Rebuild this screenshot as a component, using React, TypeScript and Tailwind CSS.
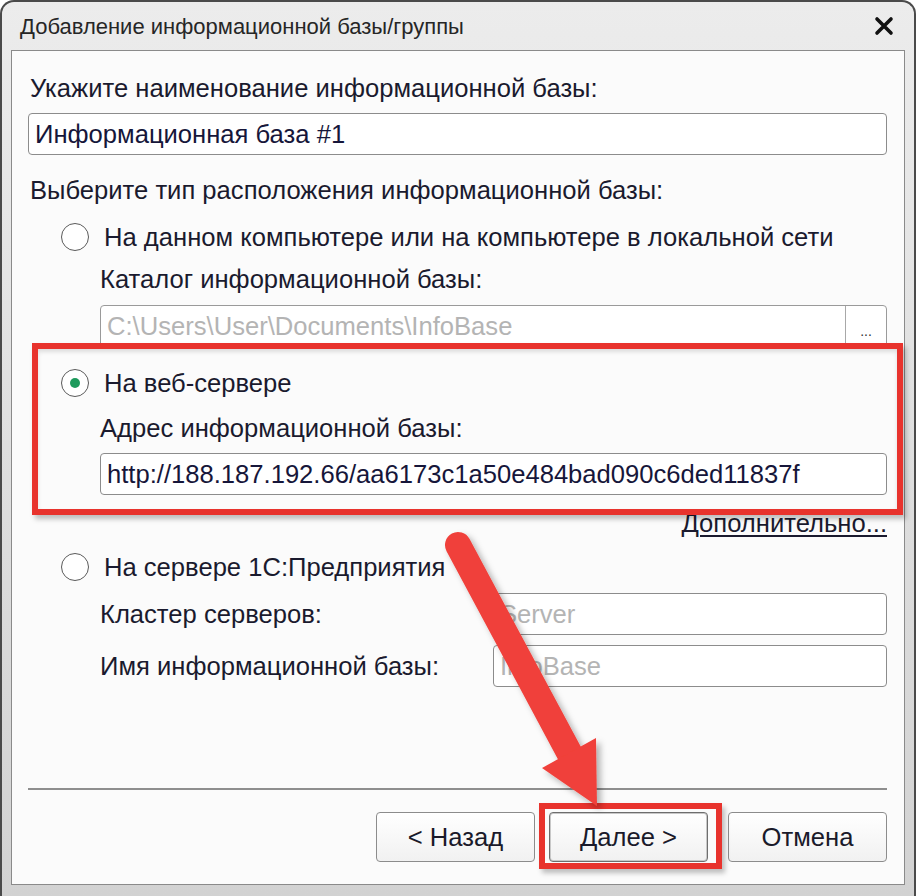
import React from 'react';

const font = { fontFamily: '"Liberation Sans", Arial, sans-serif' };

function Radio({ checked = false }: { checked?: boolean }) {
  return (
    <span className="flex h-[28px] w-[28px] shrink-0 items-center justify-center rounded-full border border-[#5a5a5a] bg-white">
      {checked && <span className="h-[10px] w-[10px] rounded-full bg-[#1e9a5c]" />}
    </span>
  );
}

function Field({ text, muted = false, className = '' }: { text: string; muted?: boolean; className?: string }) {
  return (
    <div
      className={`flex h-[42px] items-center rounded-[4px] border border-[#8c8c8c] bg-white pl-[6px] ${
        muted ? 'text-[#b4b4b4]' : 'text-[#16163a]'
      } ${className}`}
    >
      {text}
    </div>
  );
}

function Button({ label, isDefault = false }: { label: string; isDefault?: boolean }) {
  return (
    <div
      className={`flex h-[50px] w-[159px] items-center justify-center rounded-[4px] border bg-gradient-to-b from-white to-[#f1f1f1] text-[#1a1a2a] ${
        isDefault ? 'border-[#6e6e6e] shadow-[inset_0_0_0_1px_#c8c8c8]' : 'border-[#8c8c8c]'
      }`}
    >
      {label}
    </div>
  );
}

export default function App() {
  return (
    <div className="relative h-[896px] w-[916px] overflow-hidden bg-white" style={font}>
      {/* window frame */}
      <div className="flex h-[896px] w-[916px] flex-col rounded-t-[14px] border-x-2 border-t-2 border-[#4a4a4a] bg-gradient-to-b from-[#ececec] to-[#d2d2d2]">
        {/* title bar */}
        <div className="flex h-[48px] shrink-0 items-center justify-between pl-[18px] pr-[20px]">
          <span className="text-[22px] text-[#262626]">Добавление информационной базы/группы</span>
          <svg width="20" height="20" viewBox="0 0 20 20">
            <path d="M3 3 L17 17 M17 3 L3 17" stroke="#111" strokeWidth="3.6" strokeLinecap="round" />
          </svg>
        </div>

        {/* content panel */}
        <div className="mx-[9px] flex h-[835px] shrink-0 flex-col border border-[#8a8a8a] bg-[#fbfbfb] pl-[16px] pr-[17px] text-[25.6px] text-[#1a1a2e]">
          <div className="ml-[2px] mt-[22px] h-[30px] leading-[30px]">Укажите наименование информационной базы:</div>
          <Field text="Информационная база #1" className="mt-[10px]" />
          <div className="ml-[2px] mt-[20px] h-[30px] leading-[30px]">Выберите тип расположения информационной базы:</div>

          <div className="ml-[33px] mt-[17px] flex h-[30px] items-center gap-[15px]">
            <Radio />
            <span>На данном компьютере или на компьютере в локальной сети</span>
          </div>
          <div className="ml-[72px] mt-[12px] h-[30px] leading-[30px]">Каталог информационной базы:</div>
          <div className="ml-[72px] mt-[11px] flex h-[42px] rounded-[4px] border border-[#9a9a9a] bg-white">
            <div className="flex flex-1 items-center pl-[6px] text-[#b4b4b4]">C:\Users\User\Documents\InfoBase</div>
            <div className="flex w-[41px] items-end justify-center border-l border-[#a8a8a8] pb-[8px] text-[14px] leading-none text-[#333]">...</div>
          </div>

          <div className="ml-[33px] mt-[21px] flex h-[30px] items-center gap-[15px]">
            <Radio checked />
            <span>На веб-сервере</span>
          </div>
          <div className="ml-[72px] mt-[15px] h-[30px] leading-[30px]">Адрес информационной базы:</div>
          <Field text="http://188.187.192.66/aa6173c1a50e484bad090c6ded11837f" className="ml-[72px] mt-[10px]" />

          <div className="mt-[13px] flex h-[30px] justify-end leading-[30px]">
            <span className="underline decoration-[2px] underline-offset-[3px]">Дополнительно...</span>
          </div>

          <div className="ml-[33px] mt-[14px] flex h-[30px] items-center gap-[15px]">
            <Radio />
            <span>На сервере 1С:Предприятия</span>
          </div>
          <div className="ml-[72px] mt-[11px] flex h-[42px] items-center">
            <span className="w-[393px] shrink-0">Кластер серверов:</span>
            <Field text="Server" muted className="flex-1" />
          </div>
          <div className="ml-[72px] mt-[10px] flex h-[42px] items-center">
            <span className="w-[393px] shrink-0">Имя информационной базы:</span>
            <Field text="InfoBase" muted className="flex-1" />
          </div>

          <div className="mt-[101px] h-[2px] bg-[#8e8e8e]" />

          <div className="mt-[22px] flex justify-end">
            <Button label="< Назад" />
            <div className="ml-[14px]">
              <Button label="Далее >" isDefault />
            </div>
            <div className="ml-[20px]">
              <Button label="Отмена" />
            </div>
          </div>
        </div>
      </div>

      {/* annotation: red frame around web-server option */}
      <div className="pointer-events-none absolute left-[32px] top-[343px] h-[172px] w-[871px] border-[6px] border-[#e8332d] shadow-[3px_4px_5px_rgba(0,0,0,0.25),inset_0_3px_4px_rgba(0,0,0,0.12)]" />

      {/* annotation: red frame around "Далее" */}
      <div className="pointer-events-none absolute left-[539px] top-[803px] h-[66px] w-[183px] border-[6px] border-[#e8332d] shadow-[3px_4px_5px_rgba(0,0,0,0.25)]" />

      {/* annotation: arrow */}
      <svg className="pointer-events-none absolute left-0 top-0" width="916" height="896" viewBox="0 0 916 896">
        <defs>
          <filter id="arrowShadow" x="-20%" y="-20%" width="140%" height="140%">
            <feDropShadow dx="4" dy="4" stdDeviation="3" floodColor="#000" floodOpacity="0.3" />
          </filter>
        </defs>
        <g filter="url(#arrowShadow)" fill="#f0403a">
          <line x1="458" y1="545" x2="571" y2="756" stroke="#f0403a" strokeWidth="26" strokeLinecap="round" />
          <polygon points="596,738 542,768 597,806" />
        </g>
      </svg>
    </div>
  );
}
